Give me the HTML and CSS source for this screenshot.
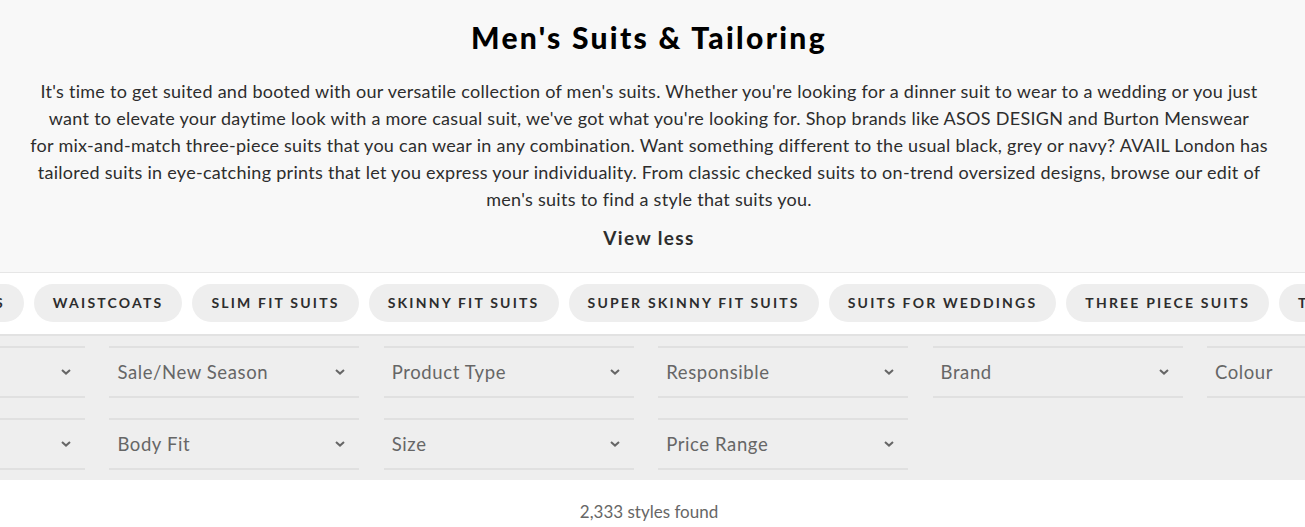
FILE: index.html
```html
<!DOCTYPE html>
<html lang="en">
<head>
<meta charset="utf-8">
<title>Men's Suits &amp; Tailoring</title>
<link rel="stylesheet" href="styles.css">
</head>
<body>
<header class="intro">
  <div class="intro-inner">
    <h1 class="title">Men's Suits &amp; Tailoring</h1>
    <p class="desc">It's time to get suited and booted with our versatile collection of men's suits. Whether you're looking for a dinner suit to wear to a wedding or you just<br>
    want to elevate your daytime look with a more casual suit, we've got what you're looking for. Shop brands like ASOS DESIGN and Burton Menswear<br>
    for mix-and-match three-piece suits that you can wear in any combination. Want something different to the usual black, grey or navy? AVAIL London has<br>
    tailored suits in eye-catching prints that let you express your individuality. From classic checked suits to on-trend oversized designs, browse our edit of<br>
    men's suits to find a style that suits you.</p>
    <button class="view-less">View less</button>
  </div>
</header>

<nav class="chips">
  <ul class="chip-list">
    <li class="chip">Suit Jackets</li>
    <li class="chip">Waistcoats</li>
    <li class="chip">Slim Fit Suits</li>
    <li class="chip">Skinny Fit Suits</li>
    <li class="chip">Super Skinny Fit Suits</li>
    <li class="chip">Suits For Weddings</li>
    <li class="chip">Three Piece Suits</li>
    <li class="chip">Tuxedos</li>
  </ul>
</nav>

<section class="filters">
  <div class="filter-grid">
    <div class="filter"><span>Sort</span><svg class="chev" viewBox="0 0 10 6"><path d="M1 1 L5 4.6 L9 1" /></svg></div>
    <div class="filter"><span>Sale/New Season</span><svg class="chev" viewBox="0 0 10 6"><path d="M1 1 L5 4.6 L9 1" /></svg></div>
    <div class="filter"><span>Product Type</span><svg class="chev" viewBox="0 0 10 6"><path d="M1 1 L5 4.6 L9 1" /></svg></div>
    <div class="filter"><span>Responsible</span><svg class="chev" viewBox="0 0 10 6"><path d="M1 1 L5 4.6 L9 1" /></svg></div>
    <div class="filter"><span>Brand</span><svg class="chev" viewBox="0 0 10 6"><path d="M1 1 L5 4.6 L9 1" /></svg></div>
    <div class="filter"><span>Colour</span><svg class="chev" viewBox="0 0 10 6"><path d="M1 1 L5 4.6 L9 1" /></svg></div>
    <div class="filter"><span>Style</span><svg class="chev" viewBox="0 0 10 6"><path d="M1 1 L5 4.6 L9 1" /></svg></div>
    <div class="filter"><span>Body Fit</span><svg class="chev" viewBox="0 0 10 6"><path d="M1 1 L5 4.6 L9 1" /></svg></div>
    <div class="filter"><span>Size</span><svg class="chev" viewBox="0 0 10 6"><path d="M1 1 L5 4.6 L9 1" /></svg></div>
    <div class="filter"><span>Price Range</span><svg class="chev" viewBox="0 0 10 6"><path d="M1 1 L5 4.6 L9 1" /></svg></div>
  </div>
</section>

<p class="count">2,333 styles found</p>
</body>
</html>
```

FILE: styles.css
```css
* { box-sizing: border-box; }

html, body {
  margin: 0;
  padding: 0;
  background: #fff;
  overflow: hidden;
}

body {
  font-family: Lato, "Noto Sans", sans-serif;
  color: #2d2d2d;
}

.intro {
  background: #f8f8f8;
  border-bottom: 1px solid #e6e6e6;
  padding: 0 7px 0 0;
}

.intro-inner {
  width: 1290px;
  margin: 0 auto;
  text-align: center;
  padding: 17px 0 20px;
}

.title {
  margin: 0;
  font-size: 30px;
  font-weight: 900;
  letter-spacing: 2.3px;
  line-height: 40px;
  color: #000;
}

.desc {
  margin: 21px 0 0;
  font-size: 18px;
  letter-spacing: 0.28px;
  line-height: 27px;
  color: #2d2d2d;
}

.view-less {
  margin-top: 11px;
  border: 0;
  background: none;
  padding: 0;
  font-family: inherit;
  font-size: 19px;
  font-weight: 700;
  letter-spacing: 1.4px;
  line-height: 28px;
  color: #2d2d2d;
  cursor: pointer;
}

.chips {
  background: #fff;
  border-bottom: 2px solid #e2e2e2;
  padding: 11px 0 12px;
  overflow: hidden;
}

.chip-list {
  list-style: none;
  margin: 0 0 0 -132px;
  padding: 0;
  display: flex;
  gap: 10px;
  white-space: nowrap;
}

.chip {
  flex: none;
  height: 38px;
  line-height: 38px;
  padding: 0 19px;
  border-radius: 19px;
  background: #eee;
  font-size: 14px;
  font-weight: 700;
  letter-spacing: 2.2px;
  text-transform: uppercase;
  color: #2d2d2d;
}

.filters {
  background: #eee;
  padding: 10px 0 10px;
  overflow: hidden;
}

.filter-grid {
  display: grid;
  grid-template-columns: repeat(6, 250px);
  column-gap: 24.4px;
  row-gap: 20px;
  width: 1622px;
  margin-left: -165px;
}

.filter {
  height: 52px;
  border-top: 2px solid #e0e0e0;
  border-bottom: 2px solid #e0e0e0;
  display: flex;
  align-items: center;
  justify-content: space-between;
  padding: 0 14px 0 8px;
  font-size: 18.5px;
  letter-spacing: 0.6px;
  color: #666;
}

.chev {
  width: 10px;
  height: 6px;
  fill: none;
  stroke: #666;
  stroke-width: 2;
}

.count {
  margin: 22px 0 0;
  padding-right: 7px;
  text-align: center;
  font-size: 17px;
  color: #666;
  line-height: 20px;
}
```
